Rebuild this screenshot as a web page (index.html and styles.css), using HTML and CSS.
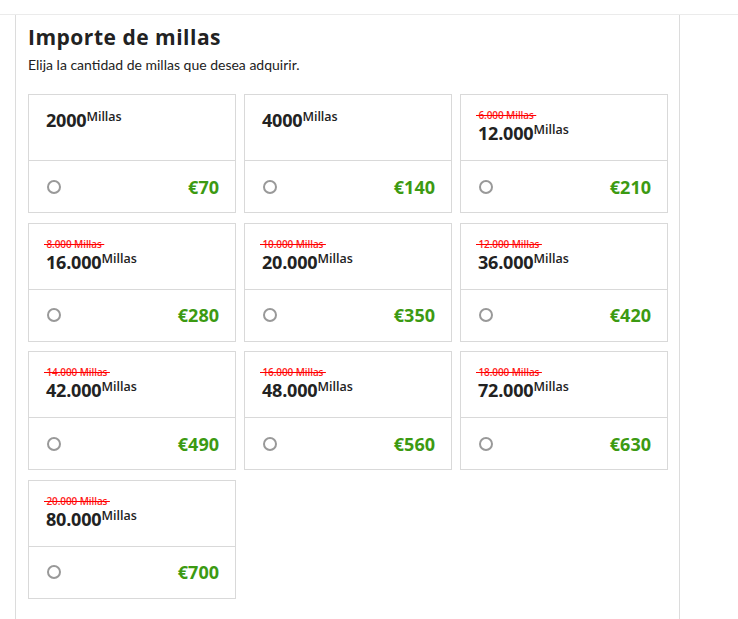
FILE: index.html
```html
<!DOCTYPE html>
<html lang="es">
<head>
<meta charset="utf-8">
<title>Importe de millas</title>
<link rel="stylesheet" href="styles.css">
</head>
<body>
<div class="topbar"></div>
<div class="wrap">
  <div class="gutter"></div>
  <main class="panel">
    <h1 class="title">Importe de millas</h1>
    <p class="lead">Elija la cantidad de millas que desea adquirir.</p>
    <div class="grid">
      <div class="card"><div class="card-top"><div class="miles">2000<sup>Millas</sup></div></div><div class="card-bottom"><span class="radio"></span><span class="price">€70</span></div></div>
      <div class="card"><div class="card-top"><div class="miles">4000<sup>Millas</sup></div></div><div class="card-bottom"><span class="radio"></span><span class="price">€140</span></div></div>
      <div class="card"><div class="card-top"><div class="old">&nbsp;6.000 Millas&nbsp;</div><div class="miles">12.000<sup>Millas</sup></div></div><div class="card-bottom"><span class="radio"></span><span class="price">€210</span></div></div>
      <div class="card"><div class="card-top"><div class="old">&nbsp;8.000 Millas&nbsp;</div><div class="miles">16.000<sup>Millas</sup></div></div><div class="card-bottom"><span class="radio"></span><span class="price">€280</span></div></div>
      <div class="card"><div class="card-top"><div class="old">&nbsp;10.000 Millas&nbsp;</div><div class="miles">20.000<sup>Millas</sup></div></div><div class="card-bottom"><span class="radio"></span><span class="price">€350</span></div></div>
      <div class="card"><div class="card-top"><div class="old">&nbsp;12.000 Millas&nbsp;</div><div class="miles">36.000<sup>Millas</sup></div></div><div class="card-bottom"><span class="radio"></span><span class="price">€420</span></div></div>
      <div class="card"><div class="card-top"><div class="old">&nbsp;14.000 Millas&nbsp;</div><div class="miles">42.000<sup>Millas</sup></div></div><div class="card-bottom"><span class="radio"></span><span class="price">€490</span></div></div>
      <div class="card"><div class="card-top"><div class="old">&nbsp;16.000 Millas&nbsp;</div><div class="miles">48.000<sup>Millas</sup></div></div><div class="card-bottom"><span class="radio"></span><span class="price">€560</span></div></div>
      <div class="card"><div class="card-top"><div class="old">&nbsp;18.000 Millas&nbsp;</div><div class="miles">72.000<sup>Millas</sup></div></div><div class="card-bottom"><span class="radio"></span><span class="price">€630</span></div></div>
      <div class="card"><div class="card-top"><div class="old">&nbsp;20.000 Millas&nbsp;</div><div class="miles">80.000<sup>Millas</sup></div></div><div class="card-bottom"><span class="radio"></span><span class="price">€700</span></div></div>
    </div>
  </main>
</div>
</body>
</html>
```
FILE: styles.css
```css
html, body {
  margin: 0;
  padding: 0;
  background: #ffffff;
  height: 100%;
}
body {
  font-family: "Open Sans", "Liberation Sans", sans-serif;
  color: #262626;
  overflow: hidden;
}
.topbar {
  height: 14px;
  border-bottom: 1px solid #ebebeb;
}
.wrap {
  display: flex;
  height: 620px;
}
.gutter {
  width: 15px;
  flex: none;
}
.panel {
  width: 640px;
  flex: none;
  border-left: 1px solid #dcdcdc;
  border-right: 1px solid #dcdcdc;
  padding: 0 11px 0 12px;
  background: #fff;
}
.title {
  margin: 8px 0 0 0;
  font-size: 21px;
  font-weight: 700;
  line-height: 28px;
  color: #222;
  letter-spacing: 0.5px;
}
.lead {
  margin: 4px 0 0 0;
  font-family: Lato, "Open Sans", sans-serif;
  font-size: 14px;
  line-height: 20px;
  color: #222;
}
.grid {
  margin-top: 19px;
  display: grid;
  grid-template-columns: repeat(3, 208px);
  grid-auto-rows: 119px;
  column-gap: 8px;
  row-gap: 9.5px;
}
.card {
  border: 1px solid #d9d9d9;
  display: flex;
  flex-direction: column;
}
.card-top {
  height: 66px;
  flex: none;
  box-sizing: border-box;
  padding: 14px 0 0 17px;
  border-bottom: 1px solid #d9d9d9;
  line-height: 1;
}
.old {
  display: block;
  font-size: 10px;
  line-height: 13px;
  font-weight: 600;
  color: #ff1a1a;
  text-decoration: line-through;
  text-decoration-color: #ff0000;
  margin-left: -2px;
  letter-spacing: -0.1px;
}
.miles {
  font-size: 18px;
  font-weight: 700;
  line-height: 22px;
  color: #222;
  letter-spacing: -0.2px;
}
.miles sup {
  font-size: 12.5px;
  font-weight: 600;
  vertical-align: 6px;
  line-height: 0;
  letter-spacing: 0;
}
.card-bottom {
  flex: 1;
  display: flex;
  align-items: center;
  justify-content: space-between;
  padding: 0 16px 0 18px;
}
.radio {
  width: 10px;
  height: 10px;
  border: 2px solid #999;
  border-radius: 50%;
}
.price {
  font-size: 18px;
  font-weight: 700;
  color: #3c9a12;
}
```
